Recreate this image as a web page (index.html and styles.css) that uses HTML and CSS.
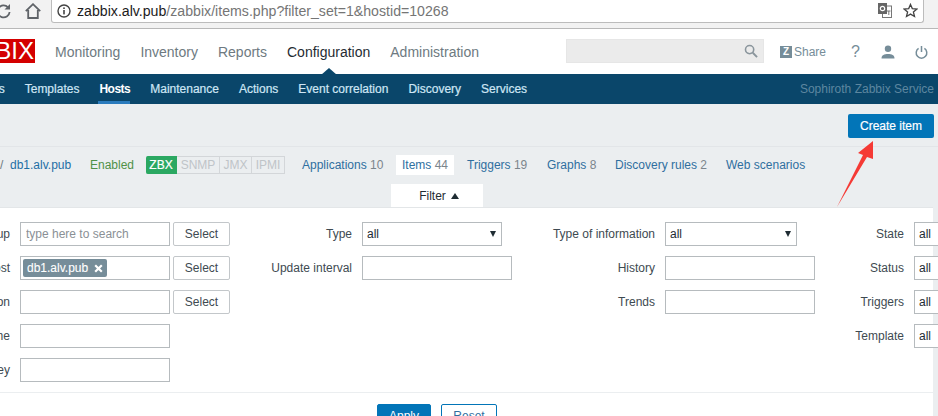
FILE: index.html
```html
<!DOCTYPE html>
<html lang="en">
<head>
<meta charset="utf-8">
<title>Items</title>
<link rel="stylesheet" href="styles.css">
</head>
<body>
<div class="page">
  <div class="chrome">
    <svg class="ch-ic reload" width="14" height="16" viewBox="0 0 14 16"><path d="M11 4.300A6 6 0 1 0 12.600 9" fill="none" stroke="#5f6368" stroke-width="1.800"/><path d="M13 1v5.500H7.500z" fill="#5f6368"/></svg>
    <svg class="ch-ic home" width="16" height="16" viewBox="0 0 16 16"><path d="M.8 8.200 8 1.200l7.200 7M3.200 7v8h9.600V7" fill="none" stroke="#5f6368" stroke-width="1.800"/></svg>
    <div class="omnibox">
      <svg width="14" height="14" viewBox="0 0 14 14"><circle cx="7" cy="7" r="6" fill="none" stroke="#444" stroke-width="1.400"/><rect x="6.200" y="6" width="1.600" height="4.400" fill="#444"/><rect x="6.200" y="3.400" width="1.600" height="1.600" fill="#444"/></svg>
      <span class="url"><b class="domain">zabbix.alv.pub</b>/zabbix/items.php?filter_set=1&amp;hostid=10268</span>
      <svg class="translate" width="14" height="15" viewBox="0 0 14 15"><rect x="4.500" y="3" width="9" height="11.500" fill="#fff" stroke="#777"/><rect x="0" y="0" width="9" height="11" fill="#666"/><circle cx="4.500" cy="5.500" r="2.200" fill="none" stroke="#fff" stroke-width="1.200"/><path d="M9 8h3.500M10.800 8v4" stroke="#777" fill="none"/></svg>
      <svg class="star" width="15" height="15" viewBox="0 0 15 15"><path d="M7.500 1.400 9.300 5.600l4.600.4-3.500 3 1.100 4.500-4-2.400-4 2.400 1.100-4.500-3.500-3 4.600-.4z" fill="none" stroke="#444" stroke-width="1.300"/></svg>
    </div>
  </div>

  <header class="top">
    <div class="logo">ZABBIX</div>
    <nav class="mainnav">
      <a>Monitoring</a><a>Inventory</a><a>Reports</a><a class="on">Configuration</a><a>Administration</a>
    </nav>
    <div class="tools">
      <div class="search">
        <svg width="14" height="14" viewBox="0 0 15 15"><circle cx="6" cy="6" r="4.400" fill="none" stroke="#8a959c" stroke-width="1.700"/><path d="M9.400 9.400 14 14" stroke="#8a959c" stroke-width="2"/></svg>
      </div>
      <span class="zlogo">Z</span><span class="share">Share</span>
      <span class="help">?</span>
      <svg class="user" width="14" height="14" viewBox="0 0 14 14"><circle cx="7" cy="3.800" r="3.200" fill="#768d99"/><path d="M0.500 13.500c0-3.600 2.800-4.600 6.500-4.600s6.500 1 6.500 4.600z" fill="#768d99"/></svg>
      <svg class="power" width="13" height="14" viewBox="0 0 13 14"><path d="M3.600 3.400a5.300 5.300 0 1 0 5.800 0M6.500 1v6" fill="none" stroke="#768d99" stroke-width="1.500"/></svg>
    </div>
  </header>

  <nav class="subnav">
    <a class="cut">Host groups</a><a>Templates</a><a class="on">Hosts</a><a>Maintenance</a><a>Actions</a><a>Event correlation</a><a>Discovery</a><a>Services</a>
    <span class="server">Sophiroth Zabbix Service</span>
  </nav>

  <main class="content">
    <div class="titlebar"><button class="btn-create">Create item</button></div>
    <div class="crumbs">
      <a class="crumb-cut">All hosts</a><span class="sep">/</span><a class="host">db1.alv.pub</a>
      <span class="enabled">Enabled</span>
      <span class="avail"><i class="zbx">ZBX</i><i class="snmp">SNMP</i><i class="jmx">JMX</i><i class="ipmi">IPMI</i></span>
      <a class="tab t-app">Applications <em>10</em></a>
      <a class="tab active">Items <em>44</em></a>
      <a class="tab t-trg">Triggers <em>19</em></a>
      <a class="tab t-gr">Graphs <em>8</em></a>
      <a class="tab t-dr">Discovery rules <em>2</em></a>
      <a class="tab">Web scenarios</a>
    </div>
    <div class="filter-tabwrap"><div class="filter-tab">Filter <span class="up"></span></div></div>
    <section class="panel">
      <div class="grid">
        <label>Host group</label><div class="f1"><input class="in w150" placeholder="type here to search"><button class="sel">Select</button></div>
        <label>Type</label><div class="fake w140">all<span class="dn"></span></div>
        <label>Type of information</label><div class="fake w132">all<span class="dn"></span></div>
        <label>State</label><div class="fake w140">all</div>

        <label>Host</label><div class="f1"><div class="in w150 chipbox"><span class="chip">db1.alv.pub <svg width="9" height="9" viewBox="0 0 9 9"><path d="M1.200 1.200 7.800 7.800M7.800 1.200 1.200 7.800" stroke="#fff" stroke-width="2.200"/></svg></span></div><button class="sel">Select</button></div>
        <label>Update interval</label><input class="in w150">
        <label>History</label><input class="in w150">
        <label>Status</label><div class="fake w140">all</div>

        <label>Application</label><div class="f1"><input class="in w150"><button class="sel">Select</button></div>
        <span></span><span></span>
        <label>Trends</label><input class="in w150">
        <label>Triggers</label><div class="fake w140">all</div>

        <label>Name</label><input class="in w150">
        <span></span><span></span><span></span><span></span>
        <label>Template</label><div class="fake w140">all</div>

        <label>Key</label><input class="in w150">
      </div>
      <div class="actions"><button class="apply">Apply</button><button class="reset">Reset</button></div>
    </section>
  </main>

  <svg class="arrow" width="60" height="85" viewBox="0 0 60 85"><path d="M7 77 33 25 28 23 43 11 43 29 37 27z" fill="#f53a35"/></svg>
</div>
</body>
</html>
```

FILE: styles.css
```css
* { box-sizing: border-box; }
html, body { margin: 0; padding: 0; }
body { font-family: "Liberation Sans", Arial, sans-serif; font-size: 12px; color: #1f2c33; background: #ebeef0; }
.page { position: relative; width: 938px; height: 416px; overflow: hidden; }

.chrome { height: 29px; background: #f2f2f2; border-bottom: 1px solid #b8b8b8; display: flex; align-items: flex-start; }
.ch-ic { flex: none; margin-top: 3px; }
.reload { margin-left: -3px; }
.home { margin-left: 14px; }
.omnibox { margin-left: 10px; width: 873px; height: 24px; margin-top: -1px; background: #fff; border: 1px solid #bcbcbc; border-top: 0; border-radius: 0 0 3px 3px; display: flex; align-items: center; padding-left: 5px; }
.url { font-size: 14.150px; color: #757575; margin-left: 6px; white-space: nowrap; }
.domain { font-weight: 400; color: #1c1c1c; }
.translate { margin-left: auto; }
.star { margin-left: 11px; margin-right: 5px; }

.top { height: 45px; background: #fff; display: flex; align-items: center; position: relative; }
.logo { flex: none; width: 70px; height: 24px; margin-left: -35px; margin-top: -1px; background: #d40000; color: #fff; font-size: 24px; line-height: 24px; display: flex; justify-content: flex-end; padding-right: 1px; overflow: hidden; white-space: nowrap; }
.mainnav { display: flex; margin-left: 10px; }
.mainnav a { padding: 0 10px; font-size: 14px; color: #6e7a81; position: relative; line-height: 20px; }
.mainnav a.on { color: #1f2c33; }
.mainnav a.on::after { content: ""; position: absolute; left: 50%; margin-left: -8px; bottom: -13px; border: 8px solid transparent; border-top: 0; border-bottom: 7px solid #0a466a; }
.tools { display: flex; align-items: center; margin-left: auto; height: 100%; }
.search { width: 198px; height: 24px; margin-top: -1px; background: #ebebeb; border: 1px solid #e6e6e6; display: flex; align-items: center; justify-content: flex-end; padding-right: 5px; }
.zlogo { width: 12px; height: 12px; margin-left: 16px; background: #768d99; color: #fff; font-size: 10px; font-weight: 700; line-height: 12px; text-align: center; }
.share { margin-left: 2px; color: #768d99; }
.help { margin-left: 25px; color: #768d99; font-size: 16px; width: 9px; }
.user { margin-left: 21px; }
.power { margin-left: 20px; margin-right: 10px; }

.subnav { height: 30px; background: #0a466a; display: flex; align-items: center; color: #cfe6f5; }
.subnav a { padding: 0 10px; line-height: 30px; height: 30px; white-space: nowrap; color: #cfe6f5; -webkit-text-stroke: 0.200px #cfe6f5; }
.subnav a.cut { margin-left: -70px; }
.subnav a.on { color: #fff; font-weight: 700; position: relative; -webkit-text-stroke: 0; letter-spacing: -0.500px; }
.subnav a.on::after { content: ""; position: absolute; left: 9px; right: 10px; bottom: 0; height: 3px; background: #2a7bbd; }
.server { margin-left: auto; margin-right: 4px; color: #5d87a0; }

.content { position: relative; }
.titlebar { height: 43px; padding: 10px 4px 0 0; display: flex; justify-content: flex-end; border-bottom: 1px solid #e2e5e8; }
.btn-create { width: 86px; height: 24px; background: #0275b8; border: 0; border-radius: 2px; color: #fff; font: 12px "Liberation Sans", Arial, sans-serif; -webkit-text-stroke: 0.200px #fff; padding: 0; }

.crumbs { display: flex; align-items: center; height: 20px; margin-top: 8px; white-space: nowrap; color: #2f6f9f; }
.crumb-cut { width: 60px; margin-left: -60px; text-align: right; flex: none; }
.sep { color: #6e7a81; width: 10px; flex: none; }
.host { width: 80px; flex: none; color: #1e6ea5; }
.enabled { width: 56px; flex: none; color: #4f9148; }
.avail { display: flex; height: 18px; flex: none; margin-right: 17px; }
.avail i { font-style: normal; display: block; height: 18px; line-height: 16px; text-align: center; border: 1px solid #d3d6d9; border-left: 0; color: #bfc4c8; }
.avail i.zbx { width: 31px; background: #2ba862; border-color: #2ba862; color: #fff; border-radius: 2px 0 0 2px; -webkit-text-stroke: 0.200px #fff; }
.avail i.snmp { width: 43px; }
.avail i.jmx { width: 32px; }
.avail i.ipmi { width: 33px; }
.tab { color: #2f6f9f; display: block; line-height: 20px; }
.tab em { font-style: normal; color: #7b858c; }
.tab.active { background: #fff; width: 58px; padding-left: 6px; margin-left: 13px; margin-right: 13px; flex: none; }
.t-app { width: 81px; flex: none; }
.t-trg { width: 80px; flex: none; }
.t-gr { width: 68px; flex: none; }
.t-dr { width: 111px; flex: none; }

.filter-tabwrap { display: flex; margin-top: 9px; padding-left: 391px; height: 23px; }
.filter-tab { width: 92px; height: 23px; background: #fff; padding-left: 4px; display: flex; align-items: center; justify-content: center; gap: 5px; }
.up { width: 0; height: 0; border: 4px solid transparent; border-top: 0; border-bottom: 6px solid #1f2c33; }

.panel { width: 933px; height: 209px; background: #fff; border-top: 1px solid #e3e6e8; padding-top: 14px; }
.grid { display: grid; grid-template-columns: 10px 210px 112px 150px 133px 150px 79px 140px; column-gap: 10px; row-gap: 10px; grid-auto-rows: 24px; height: 160px; width: 1054px; }
.grid label { white-space: nowrap; display: flex; align-items: center; justify-content: flex-end; color: #3e4a51; }
.f1 { display: flex; gap: 3px; }
.in { height: 24px; border: 1px solid #b6bbbe; background: #fff; padding: 0 5px; font: 12px "Liberation Sans", Arial, sans-serif; display: block; }
.in::placeholder { color: #8a9095; opacity: 1; }
.w150 { width: 150px; }
.sel { width: 57px; height: 24px; background: #fff; border: 1px solid #c3c7ca; border-radius: 2px; color: #3e4a51; font: 12px "Liberation Sans", Arial, sans-serif; padding: 0; }
.fake { height: 24px; border: 1px solid #b6bbbe; background: #fff; line-height: 22px; padding-left: 4px; position: relative; color: #1f2c33; }
.w140 { width: 140px; }
.w132 { width: 132px; }
.dn { position: absolute; right: 5px; top: 8px; border: 3.500px solid transparent; border-bottom: 0; border-top: 6px solid #1f2c33; }
.chipbox { padding: 2px 0 0 2px; }
.chip { display: inline-flex; align-items: center; gap: 6px; height: 18px; padding: 0 4px; border-radius: 2px; background: #768d99; color: #fff; line-height: 18px; -webkit-text-stroke: 0.100px #fff; }
.actions { border-top: 1px solid #ebeef0; margin-top: 10px; padding: 11px 0 0 377px; display: flex; gap: 10px; }
.apply, .reset { height: 24px; border-radius: 2px; font: 12px "Liberation Sans", Arial, sans-serif; padding: 0; }
.apply { width: 54px; background: #0275b8; border: 1px solid #0275b8; color: #fff; }
.reset { width: 56px; background: #fff; border: 1px solid #0275b8; color: #2f6f9f; }

.arrow { position: absolute; left: 830px; top: 130px; }
```
